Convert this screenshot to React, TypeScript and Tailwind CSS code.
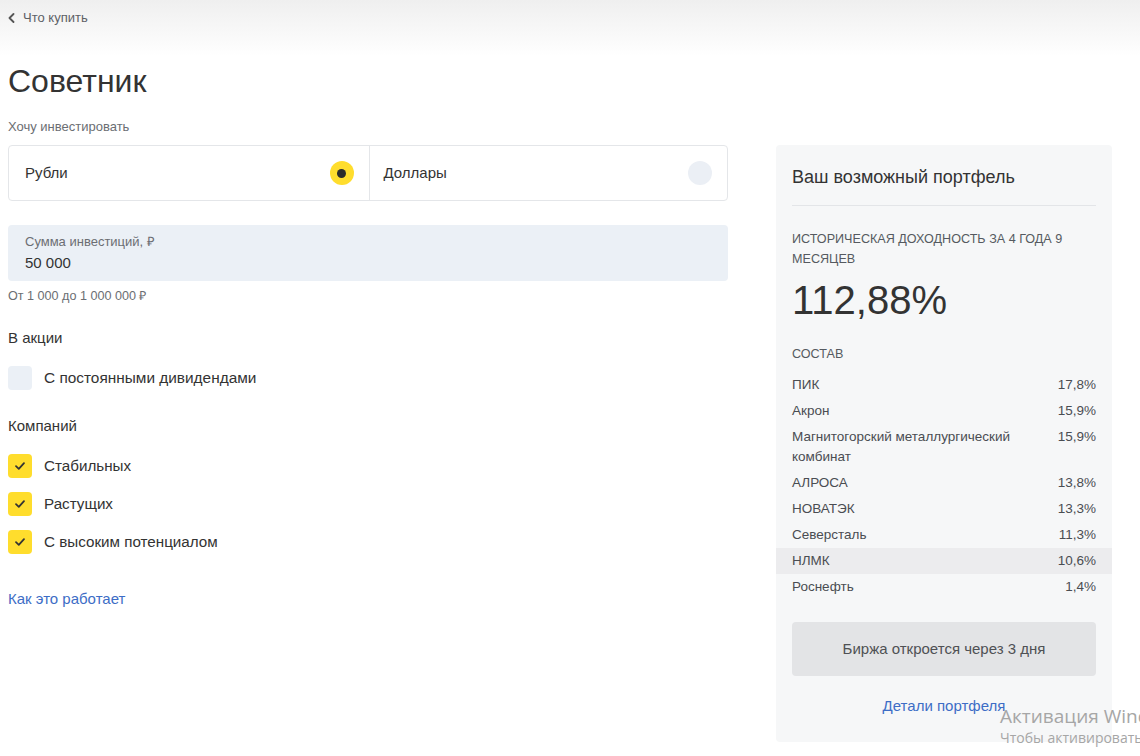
import React from "react";

const rows: { name: string; pct: string; hl?: boolean }[] = [
  { name: "ПИК", pct: "17,8%" },
  { name: "Акрон", pct: "15,9%" },
  { name: "Магнитогорский металлургический комбинат", pct: "15,9%" },
  { name: "АЛРОСА", pct: "13,8%" },
  { name: "НОВАТЭК", pct: "13,3%" },
  { name: "Северсталь", pct: "11,3%" },
  { name: "НЛМК", pct: "10,6%", hl: true },
  { name: "Роснефть", pct: "1,4%" },
];

function Check() {
  return (
    <div className="w-6 h-6 rounded-[4px] bg-[#ffdd2d] flex items-center justify-center shrink-0">
      <svg width="12" height="10" viewBox="0 0 12 10" fill="none">
        <path d="M2 5.2 L4.8 7.8 L10 2.2" stroke="#333" strokeWidth="1.8" strokeLinecap="round" strokeLinejoin="round" />
      </svg>
    </div>
  );
}

export default function App() {
  return (
    <div
      className="relative w-[1140px] h-[756px] overflow-hidden bg-white text-[#333333]"
      style={{ fontFamily: '"Liberation Sans", Arial, sans-serif' }}
    >
      <div className="absolute inset-x-0 top-0 h-[56px] bg-gradient-to-b from-[#efefef] to-white" />
      <div className="relative px-2">
        <div className="h-9 flex items-center gap-[8px] text-[13px] text-[#5d6166]">
          <svg width="7" height="10" viewBox="0 0 7 10" fill="none">
            <path d="M5.5 1 L1.5 5 L5.5 9" stroke="#555" strokeWidth="1.8" strokeLinecap="round" strokeLinejoin="round" />
          </svg>
          <span>Что купить</span>
        </div>
        <h1 className="mt-[26px] text-[32px] leading-[38px] text-[#333]">Советник</h1>
        <div className="mt-[19px] text-[13px] leading-[16px] text-[#6b6e73]">Хочу инвестировать</div>

        <div className="mt-[10px] flex gap-12 items-start">
          <div className="w-[720px] shrink-0">
            <div className="h-14 flex border border-[#e4e6e9] rounded-[4px]">
              <div className="flex-1 flex items-center justify-between pl-4 pr-[15px] border-r border-[#e4e6e9]">
                <span className="text-[15px]">Рубли</span>
                <div className="w-6 h-6 rounded-full bg-[#ffdd2d] flex items-center justify-center">
                  <div className="w-[9px] h-[9px] rounded-full bg-[#2b2b2b]" />
                </div>
              </div>
              <div className="flex-1 flex items-center justify-between pl-[14px] pr-[15px]">
                <span className="text-[15px]">Доллары</span>
                <div className="w-6 h-6 rounded-full bg-[#ebeff5]" />
              </div>
            </div>

            <div className="mt-6 h-14 bg-[#ebf0f6] rounded-[4px] pl-[17px] pt-[9px]">
              <div className="text-[13px] leading-[16px] text-[#6b6e73]">Сумма инвестиций, ₽</div>
              <div className="mt-[3px] text-[15px] leading-[20px] text-[#333]">50 000</div>
            </div>
            <div className="mt-[7px] text-[12.6px] leading-[16px] text-[#6b6e73]">От 1 000 до 1 000 000 ₽</div>

            <div className="mt-6 text-[15px] leading-[20px]">В акции</div>
            <div className="mt-[18px] flex items-center gap-3">
              <div className="w-6 h-6 rounded-[4px] bg-[#ebf0f6]" />
              <span className="text-[15.4px]">С постоянными дивидендами</span>
            </div>

            <div className="mt-[26px] text-[15px] leading-[20px]">Компаний</div>
            <div className="mt-[18px] flex flex-col gap-[14px]">
              {["Стабильных", "Растущих", "С высоким потенциалом"].map((t) => (
                <div key={t} className="flex items-center gap-3">
                  <Check />
                  <span className="text-[15.2px]">{t}</span>
                </div>
              ))}
            </div>

            <div className="mt-[35px] text-[15px] leading-[20px] text-[#3d6dc6]">Как это работает</div>
          </div>

          <div className="w-[336px] shrink-0 bg-[#f6f7f8] rounded-[4px] px-4 pt-5 pb-[26px]">
            <div className="text-[18px] leading-[24px] text-[#333]">Ваш возможный портфель</div>
            <div className="mt-4 h-px bg-[#e3e5e8]" />
            <div className="mt-[23px] text-[12.6px] leading-[20px] text-[#555a60]">
              ИСТОРИЧЕСКАЯ ДОХОДНОСТЬ ЗА 4 ГОДА 9 МЕСЯЦЕВ
            </div>
            <div className="mt-[7px] text-[40px] leading-[48px] text-[#333]">112,88%</div>
            <div className="mt-[20px] text-[12.6px] leading-[20px] text-[#555a60]">СОСТАВ</div>
            <div className="mt-2">
              {rows.map((r) => (
                <div
                  key={r.name}
                  className={`-mx-4 px-4 py-[3px] flex justify-between gap-6 text-[13.5px] leading-[20px] text-[#4a4d52] ${r.hl ? "bg-[#ececee]" : ""}`}
                >
                  <span className="max-w-[230px]">{r.name}</span>
                  <span>{r.pct}</span>
                </div>
              ))}
            </div>
            <div className="mt-[22px] h-[54px] rounded-[4px] bg-[#e3e4e6] flex items-center justify-center text-[15px] text-[#4f5154]">
              Биржа откроется через 3 дня
            </div>
            <div className="mt-5 text-center text-[15px] leading-[20px] text-[#3d6dc6]">Детали портфеля</div>
          </div>
        </div>
      </div>

      <div
        className="absolute left-[1000px] top-[704px] whitespace-nowrap text-[#a6a6a6]"
        style={{ fontFamily: '"Open Sans", "Noto Sans", sans-serif' }}
      >
        <div className="text-[19px] leading-[24px]">Активация Windows</div>
        <div className="text-[14px] leading-[19px]">Чтобы активировать Windows, перейдите в раздел</div>
      </div>
    </div>
  );
}
